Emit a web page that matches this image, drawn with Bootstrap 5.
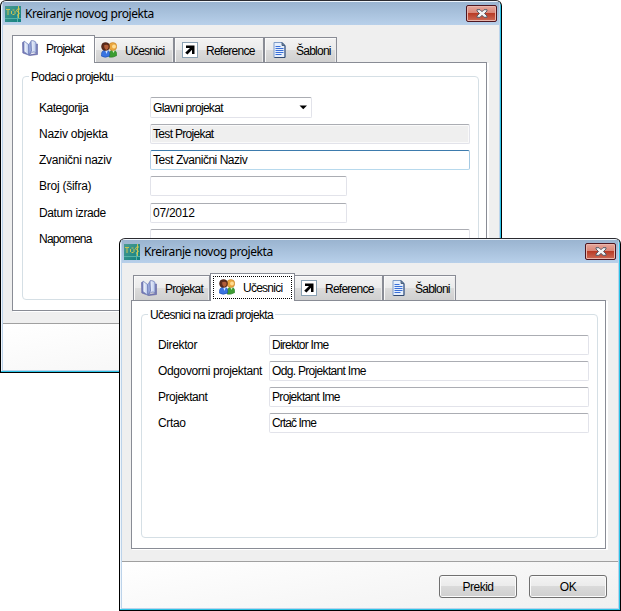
<!DOCTYPE html>
<html lang="sr">
<head>
<meta charset="utf-8">
<meta name="viewport" content="width=device-width, initial-scale=1">
<title>Kreiranje novog projekta</title>
<link href="https://cdn.jsdelivr.net/npm/bootstrap@5.3.0/dist/css/bootstrap.min.css" rel="stylesheet">
<style>
body{background:#fff;font-family:"Liberation Sans",Arial,sans-serif;font-size:12px;line-height:14px;letter-spacing:-.37px;color:#000;height:611px;overflow:hidden}
.win{width:502px;height:373px;border:1px solid #000;border-top-color:#2b2b30;border-radius:6px 6px 0 0;background:#efefef;overflow:hidden;box-shadow:inset -1px -1px #2cc3e6,inset 1px 1px #eef5fc;padding:1px}
.win-a{left:0;top:0}
.win-b{left:119px;top:238px}
.frame{border:1px solid #bcd3ea;border-top:0;height:100%}
.titlebar{height:23px;padding:0 2px 0 2px;background:linear-gradient(#9ab4d0,#b8d0ea)}
.titlebar .caption{font-family:"Noto Sans","Open Sans",sans-serif;font-size:12px;line-height:16px;letter-spacing:-.42px;margin-left:4px}
.close-btn{width:31px;height:17px;border:1px solid #4e1620;border-radius:2px;background:linear-gradient(#e6a79c 0,#d98475 48%,#b93c27 50%,#cd6a55 100%);box-shadow:inset 0 0 0 1px #e9b5ab;padding:0}
.workarea{height:298px;padding:10px 11px 0 9px}
.tabstrip{height:27px;letter-spacing:-.75px}
.tabitem{height:25px;border:1px solid #898c95;border-bottom:0;background:linear-gradient(#f3f3f3 0,#ebebeb 48%,#dcdcdc 50%,#cfcfcf 100%);box-shadow:inset 1px 1px #fafafa,inset -1px 0 #ececec}
.tabitem span{margin-top:2px}
.tabitem.current{height:28px;margin-bottom:-1px;background:#fff;box-shadow:none;z-index:1}
.t1{width:80px;margin-left:2px;padding-left:7px}
.t2{width:80px;padding-left:6px;margin-left:-1px}
.t3{width:90px;padding-left:7px}
.t4{width:73px;padding-left:7px}
.win-a .t1{width:83px;margin-left:0;padding-left:9px;padding-bottom:3px}
.win-b .t1{width:77px}
.win-b .t2{width:85px;margin-left:0;padding:2px 2px 1px}
.win-b .t3{margin-left:-2px}
.focusbox{width:79px;height:23px;border:1px dotted #000;padding:0 0 2px 5px}
.pane{height:249px;width:475px;border:1px solid #898c95;background:#fff;box-shadow:1px 1px #fff,2px 1px #fff;padding:13px 7px 10px 9px}
.group{height:224px;width:457px;border:1px solid #d5dfe5;border-radius:4px;padding-left:16px}
.group-title{margin:-7px 0 0 -10px;padding:0 2px;background:#fff;width:max-content;height:14px;letter-spacing:-.63px}
.fields{margin-top:13px;row-gap:6px}
.rowline{height:20px}
.rowline.taller{height:21px}
.rowline.lowered{margin-top:1px}
.rowline label{width:111px}
.rowline .box{height:20px;width:320px;font-size:12px;line-height:18px;letter-spacing:-.68px;color:#000;border:1px solid #e2e3ea;border-top-color:#abadb3;border-radius:2px;padding:0 0 0 2px;background:#fff}
.rowline .narrow{width:197px}
.rowline .combo{width:162px;height:21px;padding-right:3px}
.rowline .readonly{background:#efefef;box-shadow:inset 0 0 0 1px #fafafa}
.rowline .active-box{border-color:#3d7bad #a4c9e3 #b7d9ed #b5cfe7}
.rowline .ls-3,.ls-3{letter-spacing:-.25px}
.rowline .ls-5,.ls-5{letter-spacing:-.48px}
.rowline .ls-7,.ls-7{letter-spacing:-.75px}
.rowline .ls-9,.ls-9{letter-spacing:-.9px}
.footer-bar{flex:1;border-top:1px solid #a0a0a0;background:linear-gradient(170deg,#fff,#f0f0f0);padding:13px 11px 0 0;gap:12px}
.win-btn{width:78px;height:23px;border:1px solid #707070;border-radius:3px;background:linear-gradient(#f3f3f3 0,#ebebeb 49%,#dadada 50%,#cfcfcf 100%);box-shadow:inset 0 0 0 1px #fbfbfb;font-size:12px;line-height:14px;color:#000;letter-spacing:-.5px;padding:0}
svg{display:block;flex:none}
</style>
<script src="https://cdn.jsdelivr.net/npm/bootstrap@5.3.0/dist/js/bootstrap.bundle.min.js"></script>
</head>
<body class="position-relative m-0">
<svg width="0" height="0" class="position-absolute">
<defs>
<linearGradient id="page" x1="0" x2="1"><stop stop-color="#fff"/><stop offset="1" stop-color="#b9c8ec"/></linearGradient>
<linearGradient id="teal" x1="0" y1="0" x2="1" y2="1"><stop stop-color="#4b9c91"/><stop offset="1" stop-color="#108080"/></linearGradient>
<symbol id="i-app" viewBox="0 0 16 16"><rect width="16" height="16" fill="url(#teal)"/><path d="M0 12.500H16M12.500 8V16" stroke="#55b3a8" fill="none"/><path d="M1 3.500H5M3 3.500V9M7.500 4H9.500M6.500 5V8M10 5V8M7.500 8.500H9.500M15 3H12.500L11.500 5L14.500 7L12.500 9.500M13.500 0V12" stroke="#d9c94e" stroke-width=".9" fill="none"/></symbol>
<symbol id="i-book" viewBox="0 0 16 16"><path d="M.5 2.500L2 2V12L7 15L14.500 13.500V4H15.500V14.500L8 15.500L.8 13Z" fill="#7d80c2" stroke="#5d609e" stroke-width=".6"/><path d="M2 1L6.500 4.500V15L2 11.500Z" fill="url(#page)" stroke="#7387bd" stroke-width=".8"/><path d="M6.500 4.500L9 1.500L9.500 11L7 15Z" fill="#9aa9dc" stroke="#6979b5" stroke-width=".6"/><path d="M9 .8C11 .3 12.800 1 14 2.500V13C12 11.500 10.500 11.500 7.500 14.500L9.500 11Z" fill="url(#page)" stroke="#6979b5" stroke-width=".8"/></symbol>
<symbol id="i-users" viewBox="0 0 16 16"><path d="M8 15C8 10 9.500 8 12 8S16 10 15.800 13.500Q12 16 8 15Z" fill="#3c9d32" stroke="#267a24" stroke-width=".6"/><path d="M11 8L12.500 11L14 8Z" fill="#d7efc8"/><circle cx="11.800" cy="4.500" r="4" fill="#eba63e" stroke="#b87927" stroke-width=".5"/><circle cx="13" cy="4.500" r="1.900" fill="#ffdc91"/><path d="M.3 14C0 10 1.800 8 5 8S9 10.500 8.500 14Q4 16.500 .3 14Z" fill="#3974e1" stroke="#1c4aae" stroke-width=".6"/><path d="M4 8L5.500 12L7 8Z" fill="#d2e5ff"/><circle cx="4.500" cy="4.500" r="4" fill="#5b2c1c" stroke="#41180e" stroke-width=".5"/><path d="M3 3.500Q5 1.800 7.500 3.500Q8 7 5.200 8Q3 7 3 3.500Z" fill="#b25d38"/></symbol>
<symbol id="i-ref" viewBox="0 0 16 16"><rect x=".5" y=".5" width="15" height="15" fill="#fff" stroke="#8aa1b3"/><path d="M4 3.500H12.500V12H10V7.800L5.500 12.500L3.200 10.800L8 6H4Z" fill="#000"/></symbol>
<symbol id="i-doc" viewBox="0 0 13 16"><path d="M.5.5H8.500L11.500 3.500V15.500H.5Z" fill="#e6effc" stroke="#7f9cc8"/><path d="M11.500 4V15.500H1" stroke="#334b73" fill="none"/><path d="M8.500.5V3.500H11.500Z" fill="#7890b1" stroke="#344b69" stroke-width=".8"/><path d="M2 4.500H7M2 6.500H10M2 8.500H10M2 10.500H10M2 12.500H8" stroke="#3a6fd8"/></symbol>
<symbol id="i-close" viewBox="0 0 12 9"><path d="M1 .7H4L6 2.700L8 .7H11V2L8.500 4.500L11 7V8.300H8L6 6.300L4 8.300H1V7L3.500 4.500L1 2Z" fill="#f4f4f4" stroke="#565e6c" stroke-width="1"/></symbol>
</defs>
</svg>

<section class="win win-a position-absolute">
 <div class="frame d-flex flex-column">
  <header class="titlebar d-flex align-items-center">
   <svg width="16" height="16"><use href="#i-app"/></svg><span class="caption">Kreiranje novog projekta</span>
   <button class="close-btn ms-auto d-flex align-items-center justify-content-center" aria-label="Zatvori"><svg width="12" height="9"><use href="#i-close"/></svg></button>
  </header>
  <main class="workarea">
   <nav class="tabstrip d-flex align-items-end">
    <div class="tabitem current t1 d-flex align-items-center position-relative"><svg width="16" height="16"><use href="#i-book"/></svg><span class="ms-2">Projekat</span></div>
    <div class="tabitem t2 d-flex align-items-center"><svg width="16" height="16"><use href="#i-users"/></svg><span class="ms-2">Učesnici</span></div>
    <div class="tabitem t3 d-flex align-items-center"><svg width="16" height="16"><use href="#i-ref"/></svg><span class="ms-2">Reference</span></div>
    <div class="tabitem t4 d-flex align-items-center"><svg width="16" height="16"><use href="#i-doc"/></svg><span class="ms-2">Šabloni</span></div>
   </nav>
   <div class="pane">
    <div class="group">
     <div class="group-title">Podaci o projektu</div>
     <form class="fields d-grid">
      <div class="rowline taller d-flex align-items-center"><label class="ls-5">Kategorija</label><div class="box combo d-flex align-items-center justify-content-between"><span>Glavni projekat</span><svg width="9" height="5" viewBox="0 0 9 5"><path d="M.5.5H8L4.250 4.300Z" fill="#000"/></svg></div></div>
      <div class="rowline d-flex align-items-center"><label class="ls-3">Naziv objekta</label><div class="box readonly">Test Projekat</div></div>
      <div class="rowline d-flex align-items-center"><label class="ls-3">Zvanični naziv</label><div class="box active-box ls-5">Test Zvanični Naziv</div></div>
      <div class="rowline d-flex align-items-center"><label class="ls-3">Broj (šifra)</label><div class="box narrow"></div></div>
      <div class="rowline lowered d-flex align-items-center"><label>Datum izrade</label><div class="box narrow ls-3">07/2012</div></div>
      <div class="rowline d-flex align-items-center"><label class="ls-7">Napomena</label><div class="box"></div></div>
     </form>
    </div>
   </div>
  </main>
  <footer class="footer-bar"></footer>
 </div>
</section>

<section class="win win-b position-absolute">
 <div class="frame d-flex flex-column">
  <header class="titlebar d-flex align-items-center">
   <svg width="16" height="16"><use href="#i-app"/></svg><span class="caption">Kreiranje novog projekta</span>
   <button class="close-btn ms-auto d-flex align-items-center justify-content-center" aria-label="Zatvori"><svg width="12" height="9"><use href="#i-close"/></svg></button>
  </header>
  <main class="workarea">
   <nav class="tabstrip d-flex align-items-end">
    <div class="tabitem t1 d-flex align-items-center"><svg width="16" height="16"><use href="#i-book"/></svg><span class="ms-2">Projekat</span></div>
    <div class="tabitem current t2 position-relative"><div class="focusbox d-flex align-items-center"><svg width="16" height="16"><use href="#i-users"/></svg><span class="ms-2">Učesnici</span></div></div>
    <div class="tabitem t3 d-flex align-items-center"><svg width="16" height="16"><use href="#i-ref"/></svg><span class="ms-2">Reference</span></div>
    <div class="tabitem t4 d-flex align-items-center"><svg width="16" height="16"><use href="#i-doc"/></svg><span class="ms-2">Šabloni</span></div>
   </nav>
   <div class="pane">
    <div class="group">
     <div class="group-title">Učesnici na izradi projekta</div>
     <form class="fields d-grid">
      <div class="rowline d-flex align-items-center"><label>Direktor</label><div class="box ls-7">Direktor Ime</div></div>
      <div class="rowline d-flex align-items-center"><label>Odgovorni projektant</label><div class="box">Odg. Projektant Ime</div></div>
      <div class="rowline d-flex align-items-center"><label class="ls-5">Projektant</label><div class="box">Projektant Ime</div></div>
      <div class="rowline d-flex align-items-center"><label>Crtao</label><div class="box ls-9">Crtač Ime</div></div>
     </form>
    </div>
   </div>
  </main>
  <footer class="footer-bar d-flex justify-content-end">
   <button class="btn win-btn">Prekid</button><button class="btn win-btn">OK</button>
  </footer>
 </div>
</section>
</body>
</html>
